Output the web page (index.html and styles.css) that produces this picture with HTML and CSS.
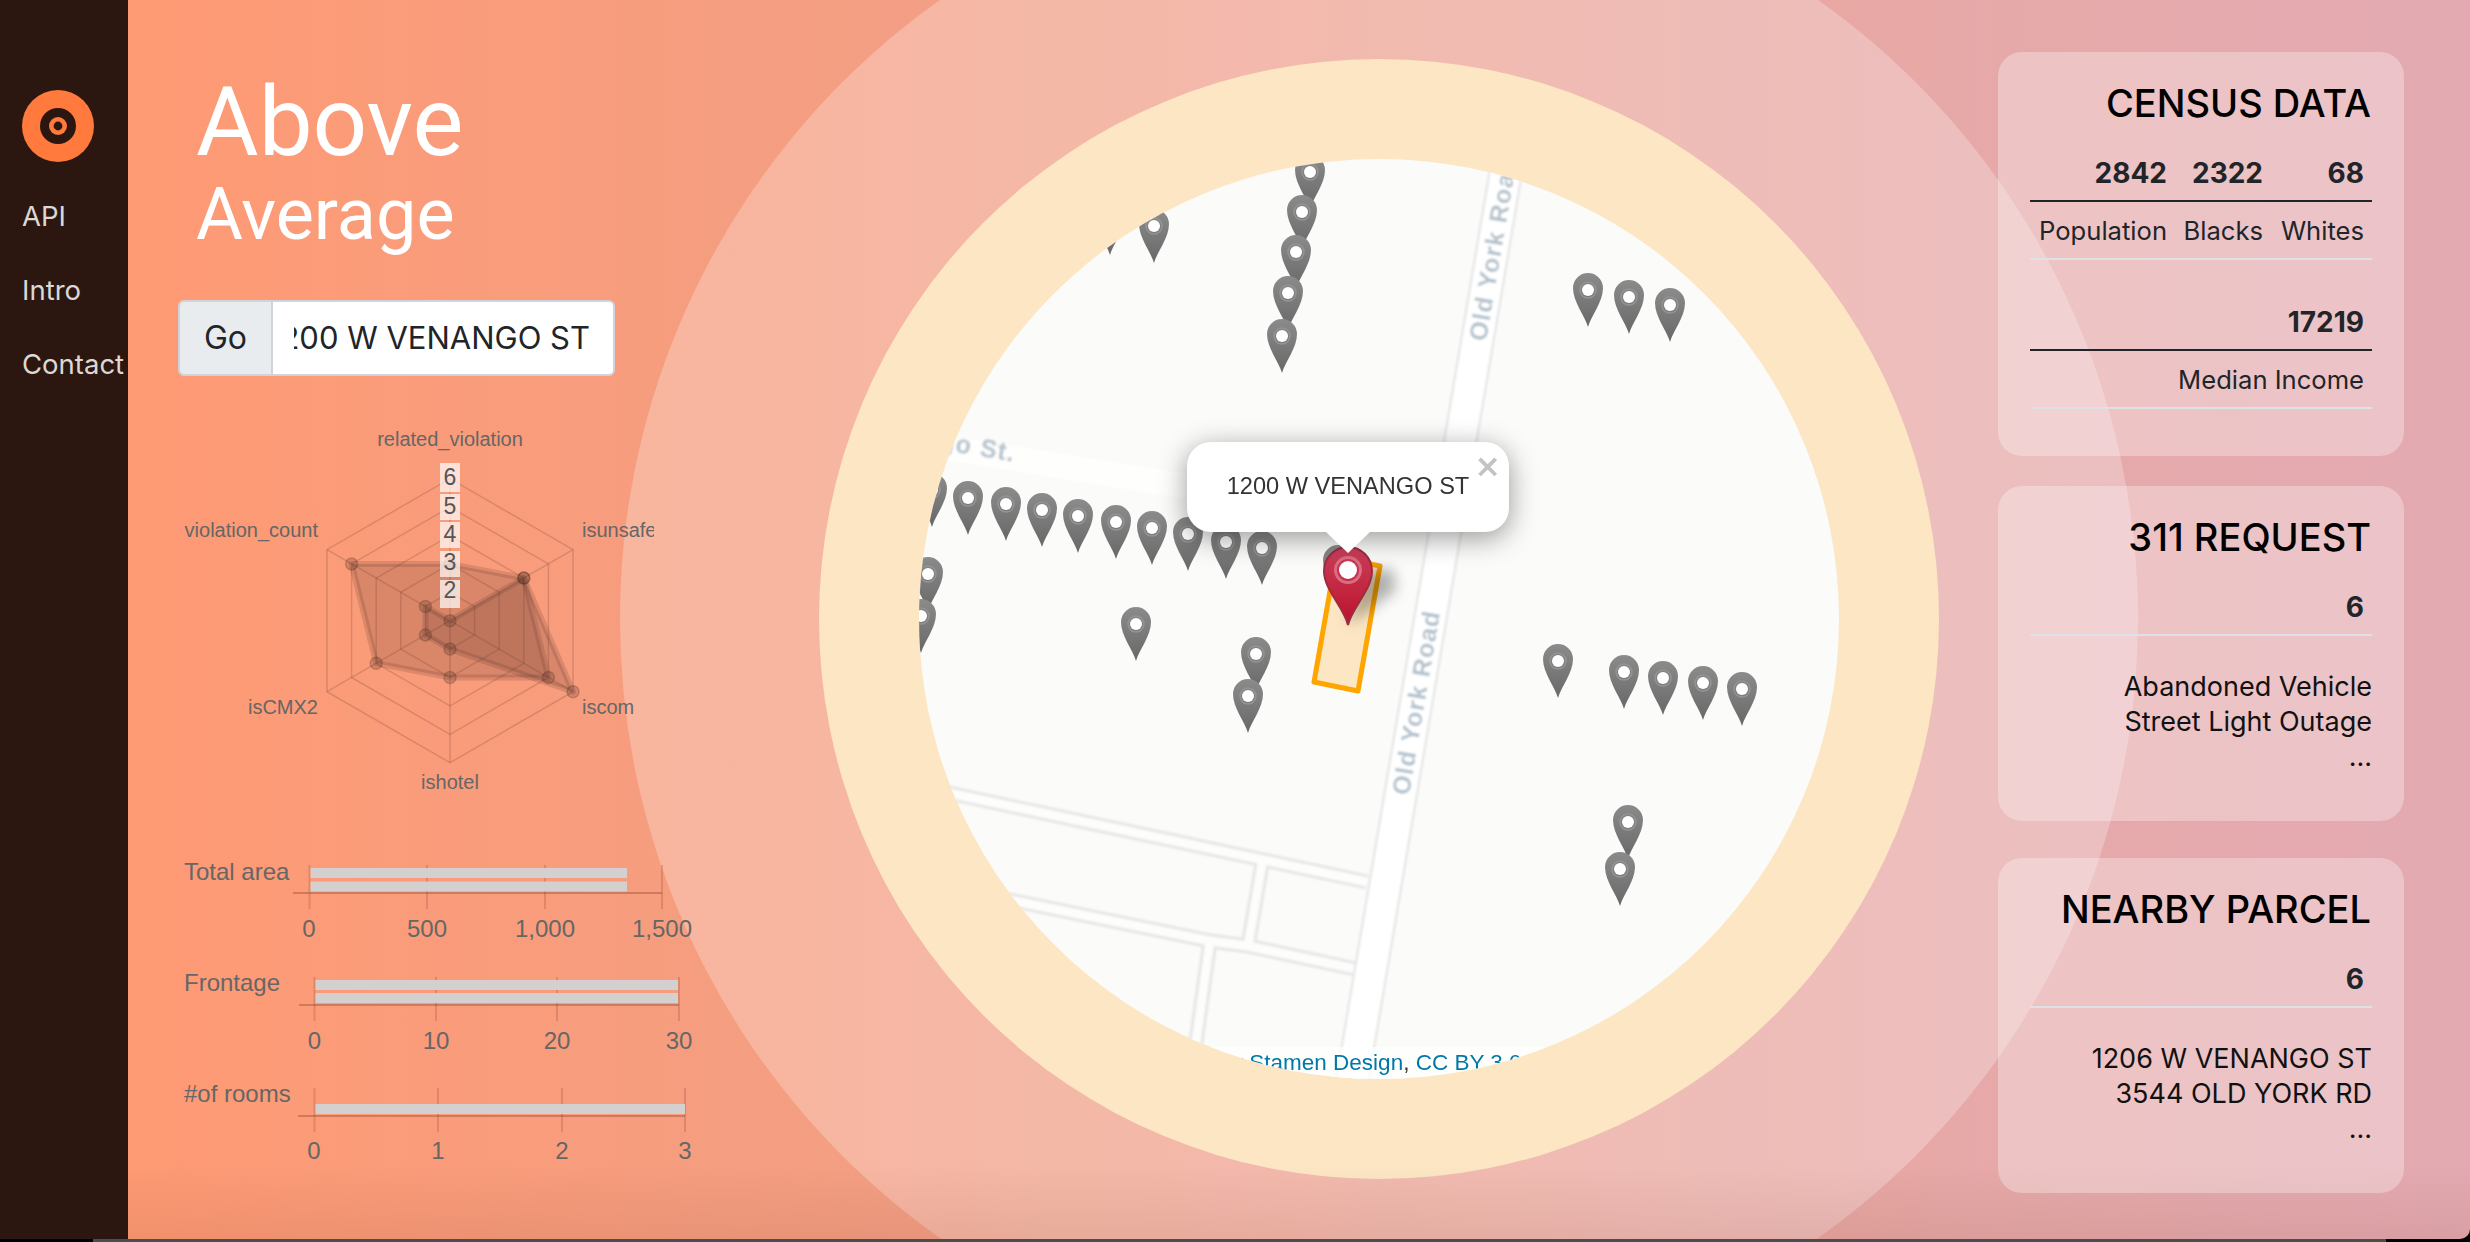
FILE: index.html
```html
<!DOCTYPE html>
<html lang="en">
<head>
    <meta charset="UTF-8">
    <meta name="viewport" content="width=device-width, initial-scale=1.0">
    <title>Above Average</title>
    <link rel="stylesheet" href="styles.css">
</head>
<body>
    <div class="page">
        <nav class="sidebar">
            <svg class="logo" viewBox="0 0 72 72">
                <circle cx="36" cy="36" r="36" fill="#ff7a3c"/>
                <circle cx="36" cy="36" r="18" fill="#2b1710"/>
                <circle cx="36" cy="36" r="9" fill="#ff7a3c"/>
                <circle cx="36" cy="36" r="4.4" fill="#2b1710"/>
            </svg>
            <a class="nav-link">API</a>
            <a class="nav-link">Intro</a>
            <a class="nav-link">Contact</a>
        </nav>

        <main class="main">
            <!-- map in the rings -->
            <div class="halo">
                <div class="ring">
                    <div class="map">
                        <svg class="map-layer" viewBox="919 159 920 920">
                            <defs>
                                <linearGradient id="pin-fill" x1="0" y1="0" x2="0" y2="1">
                                    <stop offset="0" stop-color="#8b8b8b"/>
                                    <stop offset="1" stop-color="#686868"/>
                                </linearGradient>
                                <linearGradient id="red-fill" x1="0" y1="0" x2="0" y2="1">
                                    <stop offset="0" stop-color="#c9405c"/>
                                    <stop offset="1" stop-color="#bf1029"/>
                                </linearGradient>
                                <filter id="soft"><feGaussianBlur stdDeviation="0.8"/></filter>
                                <filter id="pin-shadow" x="-50%" y="-50%" width="200%" height="200%"><feGaussianBlur stdDeviation="7"/></filter>
                                <symbol id="pin" width="30" height="54" viewBox="0 0 30 54">
                                    <path d="M15 54C12 43 0 29 0 15a15 15 0 0 1 30 0C30 29 18 43 15 54Z" fill="url(#pin-fill)"/>
                                    <circle cx="15" cy="17" r="8" fill="none" stroke="#949494" stroke-width="1.5"/>
                                    <circle cx="15" cy="17" r="6" fill="#fff"/>
                                </symbol>
                            </defs>

                            <g class="roads" filter="url(#soft)">
                                <path class="venango" d="M925 444L1190 487"/>
                                <g class="road-edge">
                                    <path d="M930 789L1367 882"/>
                                    <path d="M1000 898L1210 941L1248 946L1360 970"/>
                                    <path d="M1263 858L1248 946"/>
                                    <path d="M1210 941L1190 1085"/>
                                </g>
                                <g class="road-fill">
                                    <path d="M930 789L1367 882"/>
                                    <path d="M1000 898L1210 941L1248 946L1360 970"/>
                                    <path d="M1263 858L1248 946"/>
                                    <path d="M1210 941L1190 1085"/>
                                </g>
                                <path class="york-edge" d="M1518 100L1349 1100"/>
                                <path class="york-fill" d="M1518 100L1349 1100"/>
                                <text class="road-label" transform="translate(1486 342) rotate(-80.4)">Old York Road</text>
                                <text class="road-label" transform="translate(1409 796) rotate(-80.4)">Old York Road</text>
                                <text class="road-label" text-anchor="end" transform="translate(1014 462) rotate(9.5)">Venango St.</text>
                            </g>

                            <polygon class="parcel" points="1336,557 1380,566 1358,691 1314,682"/>

                            <use href="#pin" x="1295" y="155"/>
                            <use href="#pin" x="1095" y="201"/>
                            <use href="#pin" x="1139" y="209"/>
                            <use href="#pin" x="1287" y="195"/>
                            <use href="#pin" x="1281" y="235"/>
                            <use href="#pin" x="1273" y="276"/>
                            <use href="#pin" x="1267" y="319"/>
                            <use href="#pin" x="1573" y="273"/>
                            <use href="#pin" x="1614" y="280"/>
                            <use href="#pin" x="1655" y="288"/>
                            <use href="#pin" x="917" y="473"/>
                            <use href="#pin" x="953" y="481"/>
                            <use href="#pin" x="991" y="487"/>
                            <use href="#pin" x="1027" y="493"/>
                            <use href="#pin" x="1063" y="499"/>
                            <use href="#pin" x="1101" y="505"/>
                            <use href="#pin" x="1137" y="511"/>
                            <use href="#pin" x="1173" y="517"/>
                            <use href="#pin" x="1211" y="525"/>
                            <use href="#pin" x="1247" y="531"/>
                            <use href="#pin" x="913" y="557"/>
                            <use href="#pin" x="906" y="599"/>
                            <use href="#pin" x="1121" y="607"/>
                            <use href="#pin" x="1241" y="637"/>
                            <use href="#pin" x="1233" y="679"/>
                            <use href="#pin" x="1543" y="644"/>
                            <use href="#pin" x="1609" y="655"/>
                            <use href="#pin" x="1648" y="661"/>
                            <use href="#pin" x="1688" y="666"/>
                            <use href="#pin" x="1727" y="672"/>
                            <use href="#pin" x="1613" y="805"/>
                            <use href="#pin" x="1605" y="852"/>
                            <use href="#pin" x="1323" y="545"/>

                            <path class="red-shadow" filter="url(#pin-shadow)" d="M1348 625L1362 572L1392 568L1396 590Z"/>
                            <path class="red-pin" d="M1348 625C1344 607 1324 590 1324 571a24 24 0 0 1 48 0C1372 590 1352 607 1348 625Z"/>
                            <circle class="red-ring" cx="1348" cy="570" r="12.5"/>
                            <circle cx="1348" cy="570" r="9" fill="#fff"/>
                        </svg>

                        <div class="popup">
                            1200 W VENANGO ST
                            <span class="popup-close">×</span>
                        </div>

                        <div class="attribution">Map tiles by <a>Stamen Design</a>, <a>CC BY 3.0</a> — Map data © <a>OpenStreetMap</a></div>
                    </div>
                </div>
            </div>
            <div class="bottom-shade"></div>

            <section class="left-col">
                <h1 class="title">Above</h1>
                <div class="subtitle">Average</div>

                <div class="search">
                    <div class="search-btn">Go</div>
                    <div class="search-input"><span class="search-text">1200 W VENANGO ST</span></div>
                </div>

                <svg class="radar" viewBox="178 415 476 390">
                    <g class="grid">
                        <polygon points="450,478.7 573,549.7 573,691.7 450,762.7 327,691.7 327,549.7"/>
                        <polygon points="450,507.1 548.4,563.9 548.4,677.5 450,734.3 351.6,677.5 351.6,563.9"/>
                        <polygon points="450,535.5 523.8,578.1 523.8,663.3 450,705.9 376.2,663.3 376.2,578.1"/>
                        <polygon points="450,563.9 499.2,592.3 499.2,649.1 450,677.5 400.8,649.1 400.8,592.3"/>
                        <polygon points="450,592.3 474.6,606.5 474.6,634.9 450,649.1 425.4,634.9 425.4,606.5"/>
                        <path d="M450 478.7V762.7M327 549.7L573 691.7M573 549.7L327 691.7"/>
                    </g>
                    <polygon class="series" points="450,563.9 523.8,578.1 548.4,677.5 450,677.5 376.2,663.3 351.6,563.9"/>
                    <polygon class="series" points="450,620.7 523.8,578.1 573,691.7 450,649.1 425.4,634.9 425.4,606.5"/>
                    <g class="points">
                        <circle cx="450" cy="563.9" r="6"/><circle cx="523.8" cy="578.1" r="6"/><circle cx="548.4" cy="677.5" r="6"/>
                        <circle cx="450" cy="677.5" r="6"/><circle cx="376.2" cy="663.3" r="6"/><circle cx="351.6" cy="563.9" r="6"/>
                        <circle cx="450" cy="620.7" r="6"/><circle cx="523.8" cy="578.1" r="6"/><circle cx="573" cy="691.7" r="6"/>
                        <circle cx="450" cy="649.1" r="6"/><circle cx="425.4" cy="634.9" r="6"/><circle cx="425.4" cy="606.5" r="6"/>
                    </g>
                    <g class="tick-bg">
                        <rect x="440" y="463" width="20" height="29"/>
                        <rect x="440" y="494" width="20" height="26"/>
                        <rect x="440" y="522" width="20" height="26"/>
                        <rect x="440" y="551" width="20" height="26"/>
                        <rect x="440" y="580" width="20" height="28"/>
                    </g>
                    <g class="ticks">
                        <text x="450" y="485">6</text>
                        <text x="450" y="514">5</text>
                        <text x="450" y="542">4</text>
                        <text x="450" y="570">3</text>
                        <text x="450" y="598">2</text>
                    </g>
                    <g class="radar-labels">
                        <text x="450" y="446" text-anchor="middle">related_violation</text>
                        <text x="582" y="537">isunsafe</text>
                        <text x="582" y="714">iscom</text>
                        <text x="450" y="789" text-anchor="middle">ishotel</text>
                        <text x="318" y="714" text-anchor="end">isCMX2</text>
                        <text x="318" y="537" text-anchor="end">violation_count</text>
                    </g>
                </svg>

                <svg class="bar-chart first" viewBox="178 855 520 90">
                    <path class="bar-grid" d="M309.500 865V909M427 865V909M545 865V909M662 865V909"/>
                    <path class="bar-axis" d="M293 893H662"/>
                    <rect class="bar" x="310.500" y="868" width="316.500" height="10"/>
                    <rect class="bar" x="310.500" y="881.500" width="316.500" height="10"/>
                    <text class="bar-label" x="184" y="879.500">Total area</text>
                    <g class="bar-ticks">
                        <text x="309" y="937">0</text>
                        <text x="427" y="937">500</text>
                        <text x="545" y="937">1,000</text>
                        <text x="662" y="937">1,500</text>
                    </g>
                </svg>

                <svg class="bar-chart" viewBox="178 965 520 90">
                    <path class="bar-grid" d="M314.500 977V1021M436 977V1021M557 977V1021M679 977V1021"/>
                    <path class="bar-axis" d="M299 1005H679"/>
                    <rect class="bar" x="315.500" y="980" width="362.500" height="10"/>
                    <rect class="bar" x="315.500" y="993" width="362.500" height="10"/>
                    <text class="bar-label" x="184" y="991">Frontage</text>
                    <g class="bar-ticks">
                        <text x="314.500" y="1049">0</text>
                        <text x="436" y="1049">10</text>
                        <text x="557" y="1049">20</text>
                        <text x="679" y="1049">30</text>
                    </g>
                </svg>

                <svg class="bar-chart" viewBox="178 1075 520 90">
                    <path class="bar-grid" d="M314.500 1088V1132M438 1088V1132M562 1088V1132M685 1088V1132"/>
                    <path class="bar-axis" d="M298 1116H685"/>
                    <rect class="bar" x="315.500" y="1104" width="369.500" height="10"/>
                    <text class="bar-label" x="184" y="1102">#of rooms</text>
                    <g class="bar-ticks">
                        <text x="314" y="1159">0</text>
                        <text x="438" y="1159">1</text>
                        <text x="562" y="1159">2</text>
                        <text x="685" y="1159">3</text>
                    </g>
                </svg>
            </section>

            <section class="right-col">
                <div class="card census">
                    <h2>CENSUS DATA</h2>
                    <table class="stats">
                        <colgroup><col class="col-a"><col class="col-b"><col class="col-c"></colgroup>
                        <tr><th>2842</th><th>2322</th><th>68</th></tr>
                        <tr><td>Population</td><td>Blacks</td><td>Whites</td></tr>
                    </table>
                    <table class="stats income">
                        <tr><th>17219</th></tr>
                        <tr><td>Median Income</td></tr>
                    </table>
                </div>

                <div class="card listing">
                    <h2>311 REQUEST</h2>
                    <div class="count">6</div>
                    <ul class="items">
                        <li>Abandoned Vehicle</li>
                        <li>Street Light Outage</li>
                        <li>...</li>
                    </ul>
                </div>

                <div class="card listing last">
                    <h2>NEARBY PARCEL</h2>
                    <div class="count">6</div>
                    <ul class="items">
                        <li>1206 W VENANGO ST</li>
                        <li>3544 OLD YORK RD</li>
                        <li>...</li>
                    </ul>
                </div>
            </section>
        </main>
    </div>
    <div class="bottom-strip"></div>
</body>
</html>
```

FILE: styles.css
```css
body {
    margin: 0;
    background-color: #000;
    font-family: Inter, "Liberation Sans", sans-serif;
    color: #212529;
}
.page {
    display: flex;
    height: 1239px;
}
.bottom-strip {
    height: 3px;
    margin: 0 84px 0 93px;
    background-color: #4d4d4d;
}

/* Sidebar */
.sidebar {
    display: flex;
    flex-direction: column;
    flex: 0 0 128px;
    box-sizing: border-box;
    padding: 90px 0 0 22px;
    background-color: #2b1710;
    overflow: hidden;
}
.logo {
    width: 72px;
    height: 72px;
    margin: 0 0 17px 0;
}
.nav-link {
    font-size: 27.500px;
    line-height: 74px;
    color: #dcd8d5;
}

/* Main area */
.main {
    position: relative;
    display: flex;
    flex: 1;
    overflow: hidden;
    border-bottom-right-radius: 10px;
    background-color: #f29f85;
    background-image: linear-gradient(90deg, #fe9a74 0%, #f49e82 30%, #e6a9a9 80%, #e3aab2 100%);
}
.bottom-shade {
    position: absolute;
    left: 0;
    right: 0;
    bottom: 0;
    height: 75px;
    background-image: linear-gradient(180deg, rgba(120, 60, 40, 0), rgba(120, 60, 40, 0.1));
}
.halo {
    position: absolute;
    left: 492px;
    top: -140px;
    display: flex;
    align-items: center;
    justify-content: center;
    width: 1518px;
    height: 1518px;
    border-radius: 50%;
    background-color: rgba(255, 255, 255, 0.25);
}
.ring {
    display: flex;
    align-items: center;
    justify-content: center;
    width: 1120px;
    height: 1120px;
    border-radius: 50%;
    background-color: #fce6c3;
}
.map {
    position: relative;
    width: 920px;
    height: 920px;
    border-radius: 50%;
    overflow: hidden;
    background-color: #fbfbf9;
}
.map-layer {
    display: block;
    width: 100%;
    height: 100%;
}
.road-edge path {
    fill: none;
    stroke: #e5e6e5;
    stroke-width: 15;
}
.road-fill path {
    fill: none;
    stroke: #fdfdfc;
    stroke-width: 9;
}
.venango {
    fill: none;
    stroke: #fefefd;
    stroke-width: 24;
}
.york-edge {
    fill: none;
    stroke: #e2e3e2;
    stroke-width: 34;
}
.york-fill {
    fill: none;
    stroke: #fff;
    stroke-width: 30;
}
.road-label {
    font-family: "Liberation Sans", sans-serif;
    font-size: 25px;
    font-weight: 700;
    letter-spacing: 1.2px;
    fill: #b4c2cd;
}
.parcel {
    fill: #fce6c3;
    stroke: #ffa500;
    stroke-width: 5;
    stroke-linejoin: round;
}
.red-shadow {
    fill: rgba(0, 0, 0, 0.3);
}
.red-pin {
    fill: url(#red-fill);
    stroke: #9c2c42;
    stroke-width: 2;
}
.red-ring {
    fill: none;
    stroke: #db6d80;
    stroke-width: 3;
}
.popup {
    position: absolute;
    left: 268px;
    top: 283px;
    width: 322px;
    height: 90px;
    border-radius: 24px;
    background-color: #fff;
    box-shadow: 0 6px 28px rgba(0, 0, 0, 0.4);
    font-family: "Liberation Sans", sans-serif;
    font-size: 23.600px;
    line-height: 88px;
    text-align: center;
    color: #333;
}
.popup::after {
    content: "";
    position: absolute;
    left: 139px;
    top: 90px;
    border-left: 22px solid transparent;
    border-right: 22px solid transparent;
    border-top: 21px solid #fff;
}
.popup-close {
    position: absolute;
    right: 8px;
    top: 10px;
    font-family: "DejaVu Sans", sans-serif;
    font-size: 32px;
    font-weight: 700;
    line-height: 28px;
    color: #c3c3c3;
}
.attribution {
    position: absolute;
    left: 0;
    right: 0;
    bottom: 0;
    height: 32px;
    padding-left: 204px;
    background-color: rgba(255, 255, 255, 0.7);
    font-family: "Liberation Sans", sans-serif;
    font-size: 22.500px;
    line-height: 32px;
    white-space: nowrap;
    color: #333;
}
.attribution a {
    color: #0078a8;
}

/* Left column */
.left-col {
    position: relative;
    flex: 0 0 520px;
    box-sizing: border-box;
    margin-left: 50px;
    padding-top: 65px;
}
.title {
    margin: 0 0 0 18px;
    font-family: Roboto, sans-serif;
    font-size: 96px;
    font-weight: 400;
    line-height: 114px;
    color: #fff;
}
.subtitle {
    margin: -7px 0 0 18px;
    font-family: Roboto, sans-serif;
    font-size: 72px;
    line-height: 86px;
    color: #fff;
}
.search {
    display: flex;
    box-sizing: border-box;
    width: 437px;
    height: 76px;
    margin-top: 42px;
    border: 2px solid #ced4da;
    border-radius: 6px;
    overflow: hidden;
    font-size: 32px;
    line-height: 72px;
}
.search-btn {
    flex: 0 0 91px;
    border-right: 2px solid #ced4da;
    background-color: #e9ecef;
    text-align: center;
}
.search-input {
    flex: 1;
    padding: 0 23px 0 21px;
    min-width: 0;
    background-color: #fff;
    font-size: 31px;
}
.search-text {
    display: flex;
    justify-content: flex-end;
    overflow: hidden;
    white-space: nowrap;
}
.radar {
    display: block;
    width: 476px;
    height: 390px;
    margin-top: 39px;
}
.grid polygon,
.grid path {
    fill: none;
    stroke: rgba(90, 50, 40, 0.2);
    stroke-width: 1.5;
}
.series {
    fill: rgba(90, 50, 40, 0.2);
    stroke: rgba(90, 50, 40, 0.18);
    stroke-width: 6;
    stroke-linejoin: round;
}
.points circle {
    fill: rgba(70, 40, 30, 0.2);
    stroke: rgba(70, 40, 30, 0.25);
    stroke-width: 1.5;
}
.tick-bg rect {
    fill: rgba(255, 255, 255, 0.7);
}
.ticks text {
    font-family: "Liberation Sans", sans-serif;
    font-size: 23px;
    text-anchor: middle;
    fill: #555;
}
.radar-labels text {
    font-family: "Liberation Sans", sans-serif;
    font-size: 20px;
    fill: #666;
}
.bar-chart {
    display: block;
    width: 520px;
    height: 90px;
    margin-top: 20px;
}
.bar-chart.first {
    margin-top: 50px;
}
.bar-grid {
    fill: none;
    stroke: rgba(120, 50, 30, 0.2);
    stroke-width: 2;
}
.bar-axis {
    fill: none;
    stroke: rgba(120, 50, 30, 0.32);
    stroke-width: 2;
}
.bar {
    fill: #d2d2d2;
    fill-opacity: 0.96;
}
.bar-label {
    font-family: "Liberation Sans", sans-serif;
    font-size: 24px;
    fill: #666;
}
.bar-ticks text {
    font-family: "Liberation Sans", sans-serif;
    font-size: 24px;
    text-anchor: middle;
    fill: #666;
}

/* Right column */
.right-col {
    position: relative;
    flex: 0 0 406px;
    margin: 0 66px 0 auto;
    padding-top: 52px;
}
.card {
    box-sizing: border-box;
    padding: 30px 32px 0;
    border-radius: 24px;
    background-color: rgba(255, 255, 255, 0.3);
    text-align: right;
}
.card h2 {
    margin: 0 1px 21px 0;
    font-size: 38px;
    font-weight: 500;
    line-height: 43px;
    color: #000;
}
.census {
    height: 404px;
}
.listing {
    height: 335px;
    margin-top: 30px;
}
.listing.last {
    margin-top: 37px;
}
.stats {
    width: 342px;
    border-collapse: collapse;
    table-layout: fixed;
}
.income {
    margin-top: 35px;
}
.col-a {
    width: 145px;
}
.col-b {
    width: 96px;
}
.col-c {
    width: 101px;
}
.stats th,
.stats td {
    padding: 0 8px 0 0;
    text-align: right;
    white-space: nowrap;
}
.stats th {
    height: 54px;
    border-bottom: 2px solid #212529;
    font-size: 28px;
    font-weight: 700;
}
.stats td {
    height: 56px;
    border-bottom: 2px solid #dee2e6;
    font-size: 25.600px;
    font-weight: 400;
}
.count {
    height: 54px;
    padding-right: 8px;
    border-bottom: 2px solid #dee2e6;
    font-size: 28px;
    font-weight: 700;
    line-height: 54px;
}
.items {
    margin: 33px 0 0;
    padding: 0;
    list-style: none;
    font-size: 27px;
    line-height: 35px;
    color: #111;
}
```
